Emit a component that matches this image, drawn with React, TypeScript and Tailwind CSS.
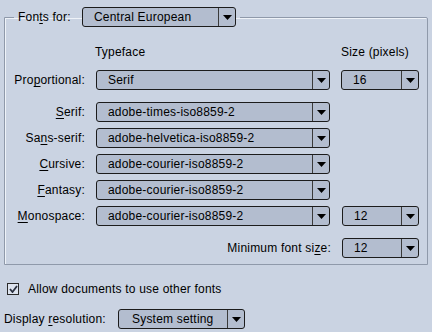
import React from 'react';

const font = { fontFamily: '"Liberation Sans", Arial, sans-serif' };

const Arrow = () => (
  <svg width="9" height="5" viewBox="0 0 9 5">
    <path d="M0 0h9L4.5 5z" fill="#000" />
  </svg>
);

interface ComboProps {
  value: string;
  className?: string;
}

const Combo: React.FC<ComboProps> = ({ value, className = '' }) => (
  <div
    className={`flex h-[20px] shrink-0 items-stretch rounded-[3px] border border-[#1c1c1c] bg-[#b3bdcf] ${className}`}
  >
    <span className="flex-1 truncate pl-[11px] text-[12px] leading-[18px] text-black">{value}</span>
    <span className="flex w-[17px] items-center justify-center border-l border-[#3a3a3a]">
      <Arrow />
    </span>
  </div>
);

// label with one underlined mnemonic letter
const Mn: React.FC<{ text: string; at: number }> = ({ text, at }) => (
  <>
    {text.slice(0, at)}
    <span className="underline underline-offset-2">{text[at]}</span>
    {text.slice(at + 1)}
  </>
);

const rows = [
  { label: 'Serif:', at: 0, value: 'adobe-times-iso8859-2' },
  { label: 'Sans-serif:', at: 2, value: 'adobe-helvetica-iso8859-2' },
  { label: 'Cursive:', at: 0, value: 'adobe-courier-iso8859-2' },
  { label: 'Fantasy:', at: 0, value: 'adobe-courier-iso8859-2' },
];

export default function App() {
  return (
    <div
      className="h-[332px] w-[432px] overflow-hidden bg-[#cad3e2] text-[12px] tracking-[0.2px] text-black"
      style={font}
    >
      <fieldset className="ml-[4px] mt-[7px] w-[424px] rounded-tr-[2px] border border-[#8f99aa] pb-[6px] shadow-[inset_1px_1px_0_#eef2f8]">
        <legend className="ml-[9px] flex items-center px-[4px]">
          <span className="w-[64px]">
            <Mn text="Fonts for:" at={3} />
          </span>
          <Combo value="Central European" className="w-[154px]" />
        </legend>

        <div className="mt-[17px] flex h-[16px] items-center">
          <span className="ml-[90px] w-[246px]">Typeface</span>
          <span>Size (pixels)</span>
        </div>

        <div className="mt-[10px] flex items-center">
          <span className="w-[80px] text-right">
            <Mn text="Proportional:" at={3} />
          </span>
          <Combo value="Serif" className="ml-[11px] w-[234px]" />
          <Combo value="16" className="ml-[11px] w-[78px]" />
        </div>

        <div className="mt-[12px] flex flex-col gap-[6px]">
          {rows.map((r) => (
            <div key={r.label} className="flex items-center">
              <span className="w-[80px] text-right">
                <Mn text={r.label} at={r.at} />
              </span>
              <Combo value={r.value} className="ml-[11px] w-[234px]" />
            </div>
          ))}
          <div className="flex items-center">
            <span className="w-[80px] text-right">
              <Mn text="Monospace:" at={0} />
            </span>
            <Combo value="adobe-courier-iso8859-2" className="ml-[11px] w-[234px]" />
            <Combo value="12" className="ml-[12px] w-[77px]" />
          </div>
        </div>

        <div className="mt-[12px] flex items-center">
          <span className="w-[326px] text-right">
            <Mn text="Minimum font size:" at={15} />
          </span>
          <Combo value="12" className="ml-[11px] w-[77px]" />
        </div>
      </fieldset>

      <div className="ml-[7px] mt-[18px] flex h-[12px] items-center">
        <span className="flex h-[12px] w-[12px] items-center justify-center border border-[#2a2a2a] bg-[#dde3ee]">
          <svg width="9" height="8" viewBox="0 0 9 8">
            <path d="M1 4l2.5 3L8 1" fill="none" stroke="#2b3140" strokeWidth="1.8" />
          </svg>
        </span>
        <span className="ml-[9px]">Allow documents to use other fonts</span>
      </div>

      <div className="ml-[4px] mt-[14px] flex items-center">
        <span className="w-[114px]">
          Display <Mn text="resolution:" at={0} />
        </span>
        <Combo value="System setting" className="w-[127px] [&>span:first-child]:pl-[13px]" />
      </div>
    </div>
  );
}
